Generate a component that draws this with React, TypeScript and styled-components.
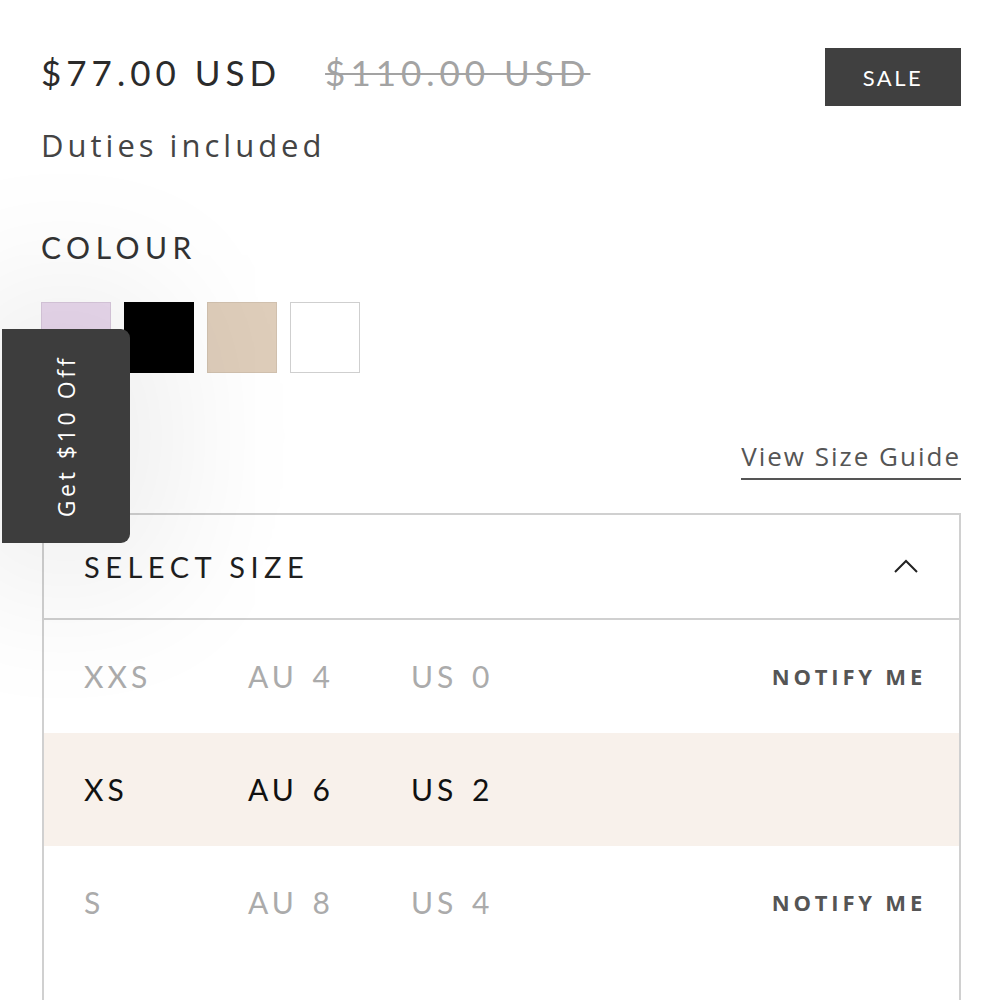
import * as React from 'react';
import styled, { createGlobalStyle } from 'styled-components';

const GlobalStyle = createGlobalStyle`
    html, body {
        margin: 0;
        padding: 0;
        background: #fff;
    }
    body {
        font-family: 'Lato', 'Liberation Sans', sans-serif;
        color: #222;
    }
`;

const Page = styled.div`
    position: relative;
    width: 1000px;
    height: 1000px;
    overflow: hidden;
    background: #fff;
    padding: 48px 39px 0 41px;
    box-sizing: border-box;
`;

const PriceRow = styled.div`
    display: flex;
    justify-content: space-between;
    align-items: flex-start;
`;

const Prices = styled.div`
    display: flex;
    align-items: baseline;
    gap: 44px;
    padding-top: 3px;
`;

const Price = styled.span<{ $old?: boolean }>`
    font-size: 35px;
    letter-spacing: 5px;
    color: ${p => (p.$old ? '#a3a3a3' : '#2b2b2b')};
    text-decoration: ${p => (p.$old ? 'line-through' : 'none')};
    text-decoration-thickness: 2px;
`;

const SaleBadge = styled.div`
    width: 136px;
    height: 58px;
    background: #404040;
    color: #fff;
    display: flex;
    align-items: center;
    justify-content: center;
    font-size: 22px;
    letter-spacing: 2.5px;
`;

const Duties = styled.div`
    margin-top: 18px;
    font-family: 'Open Sans', 'Liberation Sans', sans-serif;
    font-size: 31px;
    letter-spacing: 4px;
    color: #444;
`;

const Label = styled.div`
    margin-top: 63px;
    font-size: 30px;
    letter-spacing: 5.5px;
    color: #333;
`;

const Swatches = styled.div`
    display: flex;
    gap: 13px;
    margin-top: 37px;
`;

const Swatch = styled.div<{ $color: string; $border?: string }>`
    width: 70px;
    height: 71px;
    box-sizing: border-box;
    background: ${p => p.$color};
    border: 1px solid ${p => p.$border || p.$color};
`;

const GuideRow = styled.div`
    display: flex;
    justify-content: flex-end;
    margin-top: 67px;
`;

const GuideLink = styled.a`
    font-family: 'Open Sans', 'Liberation Sans', sans-serif;
    font-size: 26px;
    letter-spacing: 2px;
    color: #555;
    text-decoration: none;
    padding-bottom: 4px;
    border-bottom: 2px solid #555;
    line-height: 1.3;
`;

const SizeBox = styled.div`
    margin-top: 33px;
    margin-left: 1px;
    border: 2px solid #d0d0d0;
    border-bottom: none;
`;

const BoxHeader = styled.div`
    height: 103px;
    display: flex;
    align-items: center;
    justify-content: space-between;
    padding: 0 40px 0 40px;
    border-bottom: 2px solid #d0d0d0;
`;

const HeaderTitle = styled.span`
    font-size: 29px;
    letter-spacing: 5.5px;
    color: #1f1f1f;
`;

const SizeRow = styled.div<{ $active?: boolean }>`
    height: 113px;
    display: flex;
    align-items: center;
    padding: 0 33px 0 40px;
    background: ${p => (p.$active ? '#f8f1eb' : 'transparent')};
`;

const Cell = styled.span<{ $active?: boolean; $w: number }>`
    width: ${p => p.$w}px;
    font-size: 30px;
    letter-spacing: 4px;
    word-spacing: 3px;
    color: ${p => (p.$active ? '#111' : '#ababab')};
`;

const Notify = styled.span`
    margin-left: auto;
    font-family: 'Open Sans', 'Liberation Sans', sans-serif;
    font-weight: 700;
    font-size: 22px;
    letter-spacing: 3.8px;
    color: #555;
`;

const OfferTab = styled.div`
    position: absolute;
    left: 2px;
    top: 329px;
    width: 128px;
    height: 214px;
    background: #3d3d3d;
    border-radius: 0 9px 9px 0;
    box-shadow: 0 0 150px 45px rgba(0, 0, 0, 0.07);
    display: flex;
    align-items: center;
    justify-content: center;
`;

const OfferText = styled.span`
    writing-mode: vertical-rl;
    transform: rotate(180deg);
    color: #fff;
    font-family: 'Open Sans', 'Liberation Sans', sans-serif;
    font-size: 23px;
    letter-spacing: 3.6px;
`;

const sizes = [
    { size: 'XXS', au: 'AU 4', us: 'US 0', available: false },
    { size: 'XS', au: 'AU 6', us: 'US 2', available: true },
    { size: 'S', au: 'AU 8', us: 'US 4', available: false },
];

export default function App() {
    return (
        <Page>
            <GlobalStyle />
            <PriceRow>
                <Prices>
                    <Price>$77.00 USD</Price>
                    <Price $old>$110.00 USD</Price>
                </Prices>
                <SaleBadge>SALE</SaleBadge>
            </PriceRow>
            <Duties>Duties included</Duties>
            <Label>COLOUR</Label>
            <Swatches>
                <Swatch $color="#e9d8ed" $border="#d8c8dc" />
                <Swatch $color="#000" />
                <Swatch $color="#decdba" $border="#d0c0ae" />
                <Swatch $color="#fff" $border="#cfcfcf" />
            </Swatches>
            <GuideRow>
                <GuideLink href="#">View Size Guide</GuideLink>
            </GuideRow>
            <SizeBox>
                <BoxHeader>
                    <HeaderTitle>SELECT SIZE</HeaderTitle>
                    <svg width="26" height="16" viewBox="0 0 26 16">
                        <polyline points="2,14 13,3 24,14" fill="none" stroke="#222" strokeWidth="2" />
                    </svg>
                </BoxHeader>
                {sizes.map(s => (
                    <SizeRow key={s.size} $active={s.available}>
                        <Cell $w={164} $active={s.available}>{s.size}</Cell>
                        <Cell $w={163} $active={s.available}>{s.au}</Cell>
                        <Cell $w={150} $active={s.available}>{s.us}</Cell>
                        {!s.available && <Notify>NOTIFY ME</Notify>}
                    </SizeRow>
                ))}
                <SizeRow />
            </SizeBox>
            <OfferTab>
                <OfferText>Get $10 Off</OfferText>
            </OfferTab>
        </Page>
    );
}
